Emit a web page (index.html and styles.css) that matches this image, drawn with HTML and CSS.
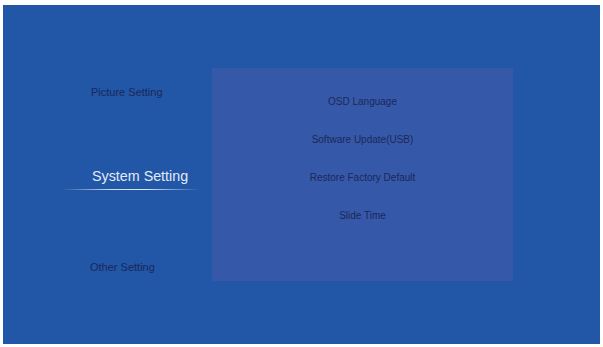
FILE: index.html
```html
<!DOCTYPE html>
<html>
<head>
<meta charset="utf-8">
<link rel="stylesheet" href="styles.css">
</head>
<body>
<div class="screen">
  <div class="menu">
    <div class="menu-item">Picture Setting</div>
    <div class="menu-item active">System Setting</div>
    <div class="underline"></div>
    <div class="menu-item other">Other Setting</div>
  </div>
  <div class="panel">
    <div class="option">OSD Language</div>
    <div class="option">Software Update(USB)</div>
    <div class="option">Restore Factory Default</div>
    <div class="option">Slide Time</div>
  </div>
</div>
</body>
</html>
```
FILE: styles.css
```css
html, body {
  margin: 0;
  padding: 0;
  background: #ffffff;
}
body {
  font-family: "Liberation Sans", Arial, sans-serif;
}
.screen {
  margin: 5px 3px 0 3px;
  height: 339px;
  background: #2256a6;
  display: flex;
  align-items: flex-start;
}
.menu {
  width: 209px;
  padding-top: 80px;
  padding-left: 88px;
  box-sizing: border-box;
  display: flex;
  flex-direction: column;
  align-items: flex-start;
}
.menu-item {
  font-size: 11px;
  line-height: 14px;
  color: #1a285a;
  white-space: nowrap;
}
.menu-item.active {
  margin-top: 68px;
  font-size: 14.3px;
  line-height: 18px;
  color: #e2eaf9;
  margin-left: 1px;
}
.underline {
  margin-top: 4px;
  margin-left: -30px;
  width: 139px;
  height: 1px;
  background: linear-gradient(to right, rgba(200,215,240,0), #c9d6f0 35%, #dfe8f8 60%, rgba(200,215,240,0));
}
.menu-item.other {
  margin-top: 70px;
  margin-left: -1px;
}
.panel {
  margin-top: 63px;
  width: 301px;
  height: 213px;
  background: #3658a8;
  padding-top: 28px;
  box-sizing: border-box;
  display: flex;
  flex-direction: column;
  align-items: center;
  gap: 26px;
}
.option {
  font-size: 10px;
  line-height: 12px;
  color: #1a285a;
  white-space: nowrap;
}
```
